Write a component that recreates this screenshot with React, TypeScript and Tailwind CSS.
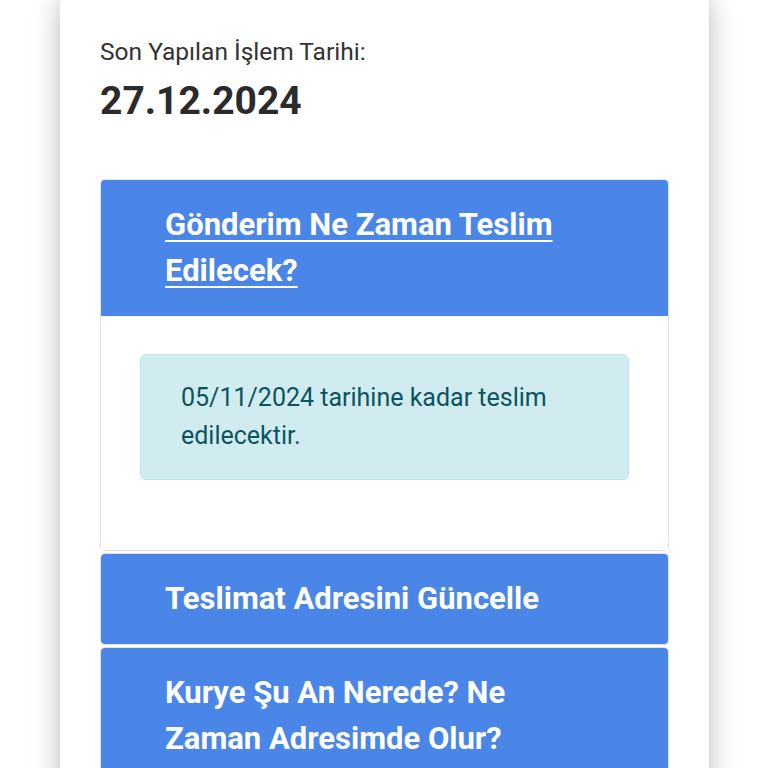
const items = [
  {
    title: "Gönderim Ne Zaman Teslim Edilecek?",
    open: true,
    body: "05/11/2024 tarihine kadar teslim edilecektir.",
  },
  { title: "Teslimat Adresini Güncelle", open: false },
  { title: "Kurye Şu An Nerede? Ne Zaman Adresimde Olur?", open: false },
];

export default function App() {
  return (
    <div className="h-[768px] overflow-hidden bg-white font-['Roboto',sans-serif]">
      <div className="ml-[60px] h-[800px] w-[649px] bg-white px-[40px] pt-[36px] shadow-[0_0_26px_rgba(0,0,0,0.28)]">
        <p className="text-[24.5px] leading-[32px] text-[#333]">Son Yapılan İşlem Tarihi:</p>
        <p className="mt-[11px] text-[39px] font-bold leading-[44px] text-[#2b2b2b]">27.12.2024</p>

        <div className="mt-[56px] flex flex-col gap-[2px]">
          {items.map((it) => (
            <div key={it.title} className="overflow-hidden rounded-[5px] border border-[#e3e3e3]">
              <div className="bg-[#4a86e8] py-[22px] pl-[64px] pr-[90px] text-[31px] font-bold leading-[46px] text-white">
                {it.open ? (
                  <a href="#" className="underline decoration-2 underline-offset-[5px]">
                    {it.title}
                  </a>
                ) : (
                  it.title
                )}
              </div>
              {it.open ? (
                <div className="bg-white px-[39px] pb-[70px] pt-[38px]">
                  <div className="rounded-[6px] border border-[#bee5eb] bg-[#d1ecf1] py-[24px] pl-[40px] pr-[40px] text-[25px] leading-[38px] text-[#0c5460]">
                    {it.body}
                  </div>
                </div>
              ) : null}
            </div>
          ))}
        </div>
      </div>
    </div>
  );
}
